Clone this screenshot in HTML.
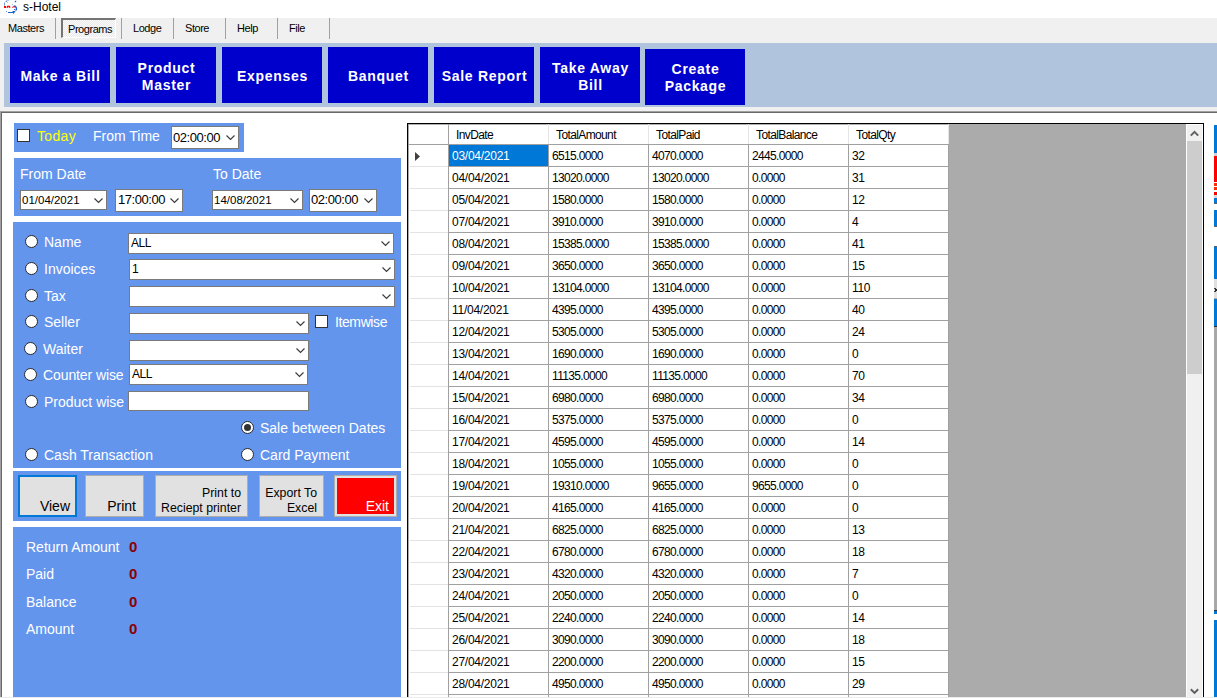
<!DOCTYPE html>
<html><head><meta charset="utf-8">
<style>
*{box-sizing:border-box;margin:0;padding:0}
html,body{width:1217px;height:698px;overflow:hidden;background:#fff;position:relative;font-family:"Liberation Sans",sans-serif}
.a{position:absolute}
.t{position:absolute;white-space:nowrap;line-height:1}
#menu{left:0;top:18px;width:1217px;height:93px;background:#f0f0f0}
.msep{position:absolute;top:18px;width:1px;height:21px;background:#a0a0a0}
.mi{position:absolute;font-size:11px;letter-spacing:-0.45px;color:#000;line-height:1}
#tool{left:4px;top:43px;width:1213px;height:64px;background:#b0c4de}
.tb{position:absolute;background:#0000cd;color:#fff;font-weight:bold;font-size:14px;letter-spacing:0.7px;text-align:center;display:flex;align-items:center;justify-content:center;line-height:17px;width:100px;height:56px;padding-top:3px;padding-left:1px}
.pnl{position:absolute;background:#6495ed}
.lbl{position:absolute;color:#fff;font-size:14px;line-height:1;white-space:nowrap}
.cb{position:absolute;background:#fff;border:1px solid #7a7a7a}
.cb span{position:absolute;left:2px;font-size:11px;color:#000;line-height:1;white-space:nowrap}
.cb svg{position:absolute}
.rd{position:absolute;width:13px;height:13px;border-radius:50%;background:#fff;border:1.3px solid #2a2a2a}
.btn{position:absolute;background:#e1e1e1;border:1px solid #adadad;color:#000;font-size:13px;line-height:15px;text-align:right}
.val{position:absolute;color:#8b0000;font-weight:bold;font-size:15px;line-height:1}
.gc,.gh{position:absolute;font-size:12px;line-height:1;white-space:nowrap;color:#000}
.gh{font-size:12px;letter-spacing:-0.62px}
.gd{letter-spacing:-0.26px}
.gn{letter-spacing:-0.65px}
.gq{letter-spacing:-0.3px}
.tm{position:absolute;font-size:13px;letter-spacing:-0.45px;line-height:1;white-space:nowrap;color:#000}
.dt{position:absolute;font-size:11.5px;line-height:1;white-space:nowrap;color:#000}
.ct{position:absolute;font-size:12px;letter-spacing:-0.5px;line-height:1;white-space:nowrap;color:#000}
.bt1{position:absolute;font-size:14px;line-height:1;white-space:nowrap;color:#000;text-align:right}
.bt2{position:absolute;font-size:12.3px;line-height:14.5px;white-space:nowrap;color:#000;text-align:right}
</style></head><body>
<!-- title -->
<svg class="a" style="left:0px;top:0px" width="20" height="15" viewBox="0 0 20 15">
  <path d="M5.5 1.5 L6.5 0.5 M6 1 L7.5 2.5 M7.5 1 L8.5 0" stroke="#5a8ee0" stroke-width="0.9" fill="none"/>
  <path d="M4.5 2.5 L4.5 5.5" stroke="#6d9be8" stroke-width="1" fill="none"/>
  <rect x="14.8" y="0.8" width="1.4" height="1.4" fill="#1060d0"/>
  <rect x="4" y="6" width="2" height="2" fill="#ff0000"/>
  <path d="M7.2 7.8 L7.5 6.5 L9.5 6.5 L9.8 7.8" stroke="#ff1010" stroke-width="1.3" fill="none"/>
  <path d="M12.2 7.6 L14 6.2 L15.5 7.5" stroke="#ff3030" stroke-width="1.2" fill="none"/>
  <path d="M14.5 5.5 L16.3 7.5 L16.5 9.5 L15.5 10.5" stroke="#1a5fd8" stroke-width="1.3" fill="none"/>
  <path d="M8 12.5 L12 12.5 L13.5 11.5 L14.5 11.5 L13.5 13 L12.5 11.5" stroke="#1560d0" stroke-width="1.2" fill="none"/>
  <rect x="6" y="11" width="1" height="1" fill="#6d9be8"/>
  <rect x="14" y="9" width="1" height="1" fill="#3070d8"/>
  <rect x="12" y="4" width="1" height="1" fill="#a0b8e0"/>
</svg>
<div class="t" style="left:23px;top:1px;font-size:12px;color:#000">s-Hotel</div>

<!-- menu -->
<div id="menu" class="a"></div>
<div class="mi" style="left:8px;top:23px">Masters</div>
<div class="msep" style="left:55px"></div>
<div class="a" style="left:61px;top:18px;width:55px;height:20px;border-top:2px solid #747474;border-left:2px solid #747474;border-right:1px solid #fff;border-bottom:1px solid #fff;background:repeating-conic-gradient(#fbfbfb 0 25%,#e9e9e9 0 50%) 0 0/2px 2px"></div>
<div class="mi" style="left:68px;top:24px">Programs</div>
<div class="msep" style="left:121px"></div>
<div class="mi" style="left:133px;top:23px">Lodge</div>
<div class="msep" style="left:173px"></div>
<div class="mi" style="left:185px;top:23px">Store</div>
<div class="msep" style="left:225px"></div>
<div class="mi" style="left:237px;top:23px">Help</div>
<div class="msep" style="left:277px"></div>
<div class="mi" style="left:289px;top:23px">File</div>
<div class="msep" style="left:329px"></div>

<!-- toolbar -->
<div id="tool" class="a"></div>
<div class="tb" style="left:10px;top:47px">Make a Bill</div>
<div class="tb" style="left:116px;top:47px">Product<br>Master</div>
<div class="tb" style="left:222px;top:47px">Expenses</div>
<div class="tb" style="left:328px;top:47px">Banquet</div>
<div class="tb" style="left:434px;top:47px">Sale Report</div>
<div class="tb" style="left:540px;top:47px">Take Away<br>Bill</div>
<div class="tb" style="left:645px;top:49px;padding-top:2px">Create<br>Package</div>

<!-- main frame -->
<div class="a" style="left:0;top:107px;width:1217px;height:4px;background:#f0f0f0"></div>
<div class="a" style="left:0;top:111px;width:1217px;height:1px;background:#a0a0a0"></div>
<div class="a" style="left:1px;top:112px;width:1216px;height:1px;background:#696969"></div>
<div class="a" style="left:0;top:111px;width:1px;height:587px;background:#a0a0a0"></div>
<div class="a" style="left:1px;top:112px;width:1px;height:586px;background:#696969"></div>

<!-- panel 1 -->
<div class="pnl" style="left:14px;top:123px;width:230px;height:29px"></div>
<div class="a" style="left:17px;top:129px;width:13px;height:13px;background:#fff;border:1px solid #333"></div>
<div class="lbl" style="left:37px;top:129px;color:#ffff00;letter-spacing:0.35px">Today</div>
<div class="lbl" style="left:93px;top:129px">From Time</div>

<!-- panel 2 -->
<div class="pnl" style="left:14px;top:158px;width:387px;height:58px"></div>
<div class="lbl" style="left:20px;top:167px">From Date</div>
<div class="lbl" style="left:213px;top:167px">To Date</div>

<!-- panel 3 -->
<div class="pnl" style="left:13px;top:222px;width:388px;height:246px"></div>

<!-- panel 4 -->
<div class="pnl" style="left:13px;top:471px;width:388px;height:50px"></div>

<!-- panel 5 -->
<div class="pnl" style="left:13px;top:527px;width:388px;height:170px"></div>

<div class="a" style="left:171px;top:126px;width:68px;height:23px;background:#fff;border:1px solid #7a7a7a"></div>
<div class="tm" style="left:173px;top:131px">02:00:00</div>
<svg class="a" style="left:226px;top:135px" width="10" height="6" viewBox="0 0 10 6"><path d="M0.5 0.5 L4.5 4.5 L8.5 0.5" fill="none" stroke="#3c3c3c" stroke-width="1.15"/></svg>
<div class="a" style="left:20px;top:190px;width:87px;height:20px;background:#fff;border:1px solid #7a7a7a"></div>
<div class="dt" style="left:22px;top:195px">01/04/2021</div>
<svg class="a" style="left:94px;top:198px" width="10" height="6" viewBox="0 0 10 6"><path d="M0.5 0.5 L4.5 4.5 L8.5 0.5" fill="none" stroke="#3c3c3c" stroke-width="1.15"/></svg>
<div class="a" style="left:115px;top:189px;width:68px;height:23px;background:#fff;border:1px solid #7a7a7a"></div>
<div class="tm" style="left:118px;top:193px">17:00:00</div>
<svg class="a" style="left:170px;top:198px" width="10" height="6" viewBox="0 0 10 6"><path d="M0.5 0.5 L4.5 4.5 L8.5 0.5" fill="none" stroke="#3c3c3c" stroke-width="1.15"/></svg>
<div class="a" style="left:212px;top:190px;width:91px;height:20px;background:#fff;border:1px solid #7a7a7a"></div>
<div class="dt" style="left:214px;top:195px">14/08/2021</div>
<svg class="a" style="left:290px;top:198px" width="10" height="6" viewBox="0 0 10 6"><path d="M0.5 0.5 L4.5 4.5 L8.5 0.5" fill="none" stroke="#3c3c3c" stroke-width="1.15"/></svg>
<div class="a" style="left:309px;top:189px;width:68px;height:23px;background:#fff;border:1px solid #7a7a7a"></div>
<div class="tm" style="left:311px;top:193px">02:00:00</div>
<svg class="a" style="left:364px;top:198px" width="10" height="6" viewBox="0 0 10 6"><path d="M0.5 0.5 L4.5 4.5 L8.5 0.5" fill="none" stroke="#3c3c3c" stroke-width="1.15"/></svg>
<div class="a" style="left:128px;top:233px;width:266px;height:21px;background:#fff;border:1px solid #7a7a7a"></div>
<div class="ct" style="left:131px;top:237px">ALL</div>
<svg class="a" style="left:381px;top:241px" width="10" height="6" viewBox="0 0 10 6"><path d="M0.5 0.5 L4.5 4.5 L8.5 0.5" fill="none" stroke="#3c3c3c" stroke-width="1.15"/></svg>
<div class="a" style="left:129px;top:259px;width:266px;height:21px;background:#fff;border:1px solid #7a7a7a"></div>
<div class="ct" style="left:132px;top:263px">1</div>
<svg class="a" style="left:382px;top:267px" width="10" height="6" viewBox="0 0 10 6"><path d="M0.5 0.5 L4.5 4.5 L8.5 0.5" fill="none" stroke="#3c3c3c" stroke-width="1.15"/></svg>
<div class="a" style="left:129px;top:286px;width:266px;height:21px;background:#fff;border:1px solid #7a7a7a"></div>
<svg class="a" style="left:382px;top:294px" width="10" height="6" viewBox="0 0 10 6"><path d="M0.5 0.5 L4.5 4.5 L8.5 0.5" fill="none" stroke="#3c3c3c" stroke-width="1.15"/></svg>
<div class="a" style="left:129px;top:313px;width:180px;height:21px;background:#fff;border:1px solid #7a7a7a"></div>
<svg class="a" style="left:296px;top:321px" width="10" height="6" viewBox="0 0 10 6"><path d="M0.5 0.5 L4.5 4.5 L8.5 0.5" fill="none" stroke="#3c3c3c" stroke-width="1.15"/></svg>
<div class="a" style="left:129px;top:340px;width:180px;height:21px;background:#fff;border:1px solid #7a7a7a"></div>
<svg class="a" style="left:296px;top:348px" width="10" height="6" viewBox="0 0 10 6"><path d="M0.5 0.5 L4.5 4.5 L8.5 0.5" fill="none" stroke="#3c3c3c" stroke-width="1.15"/></svg>
<div class="a" style="left:129px;top:364px;width:179px;height:21px;background:#fff;border:1px solid #7a7a7a"></div>
<div class="ct" style="left:132px;top:368px">ALL</div>
<svg class="a" style="left:295px;top:372px" width="10" height="6" viewBox="0 0 10 6"><path d="M0.5 0.5 L4.5 4.5 L8.5 0.5" fill="none" stroke="#3c3c3c" stroke-width="1.15"/></svg>
<div class="a" style="left:128px;top:391px;width:181px;height:20px;background:#fff;border:1px solid #7a7a7a"></div>
<div class="rd" style="left:25px;top:235px"></div>
<div class="lbl" style="left:44px;top:234.5px">Name</div>
<div class="rd" style="left:25px;top:262px"></div>
<div class="lbl" style="left:44px;top:261.5px">Invoices</div>
<div class="rd" style="left:25px;top:289px"></div>
<div class="lbl" style="left:44px;top:288.5px">Tax</div>
<div class="rd" style="left:25px;top:315px"></div>
<div class="lbl" style="left:44px;top:314.5px">Seller</div>
<div class="rd" style="left:24px;top:342px"></div>
<div class="lbl" style="left:43px;top:341.5px">Waiter</div>
<div class="rd" style="left:24px;top:368px"></div>
<div class="lbl" style="left:43px;top:367.5px;letter-spacing:-0.1px">Counter wise</div>
<div class="rd" style="left:25px;top:395px"></div>
<div class="lbl" style="left:44px;top:394.5px">Product wise</div>
<div class="rd" style="left:241px;top:421px"></div>
<div class="lbl" style="left:260px;top:420.5px">Sale between Dates</div>
<div class="rd" style="left:25px;top:448px"></div>
<div class="lbl" style="left:44px;top:447.5px">Cash Transaction</div>
<div class="rd" style="left:241px;top:448px"></div>
<div class="lbl" style="left:260px;top:447.5px">Card Payment</div>
<div class="a" style="left:244px;top:424px;width:7px;height:7px;border-radius:50%;background:#333"></div>
<div class="a" style="left:315px;top:315px;width:13px;height:13px;background:#fff;border:1px solid #333"></div>
<div class="lbl" style="left:335px;top:315px;letter-spacing:-0.4px">Itemwise</div>
<div class="a" style="left:18px;top:475px;width:59px;height:42px;background:#e1e1e1;border:2px solid #0078d7"></div>
<div class="bt1" style="right:1147px;top:499px">View</div>
<div class="a" style="left:85px;top:475px;width:59px;height:42px;background:#e1e1e1;border:1px solid #adadad"></div>
<div class="bt1" style="right:1081px;top:499px">Print</div>
<div class="a" style="left:155px;top:475px;width:93px;height:42px;background:#e1e1e1;border:1px solid #adadad"></div>
<div class="bt2" style="right:976px;top:486px">Print to<br>Reciept printer</div>
<div class="a" style="left:259px;top:475px;width:65px;height:42px;background:#e1e1e1;border:1px solid #adadad"></div>
<div class="bt2" style="right:900px;top:486px">Export To<br>Excel</div>
<div class="a" style="left:334px;top:475px;width:63px;height:42px;background:#e1e1e1;border:1px solid #adadad"></div>
<div class="a" style="left:337px;top:478px;width:57px;height:36px;background:#ff0000"></div>
<div class="bt1" style="right:828px;top:499px;color:#fff">Exit</div>
<div class="lbl" style="left:26px;top:540px">Return Amount</div>
<div class="val" style="left:129px;top:539px">0</div>
<div class="lbl" style="left:26px;top:567px">Paid</div>
<div class="val" style="left:129px;top:566px">0</div>
<div class="lbl" style="left:26px;top:595px">Balance</div>
<div class="val" style="left:129px;top:594px">0</div>
<div class="lbl" style="left:26px;top:622px">Amount</div>
<div class="val" style="left:129px;top:621px">0</div>
<!-- grid -->
<div class="a" style="left:407px;top:123px;width:797px;height:1px;background:#000"></div>
<div class="a" style="left:407px;top:123px;width:1px;height:575px;background:#000"></div>
<div class="a" style="left:1203px;top:123px;width:1px;height:575px;background:#000"></div>
<div class="a" style="left:408px;top:124px;width:541px;height:574px;background:#fff"></div>
<div class="a" style="left:408px;top:124px;width:778px;height:1px;background:#b0b0b0"></div>
<div class="a" style="left:408px;top:124px;width:1px;height:574px;background:#a8a8a8"></div>
<div class="a" style="left:949px;top:124px;width:237px;height:574px;background:#ababab"></div>
<div class="a" style="left:1186px;top:124px;width:17px;height:574px;background:#fff"></div>
<div class="a" style="left:1187px;top:125px;width:15px;height:573px;background:#f0f0f0"></div>
<div class="a" style="left:1187px;top:141px;width:15px;height:233px;background:#cdcdcd"></div>
<svg class="a" style="left:1189px;top:128px" width="11" height="10" viewBox="0 0 11 10"><path d="M1.8 7.6 L5.5 3.9 L9.2 7.6" fill="none" stroke="#606060" stroke-width="2"/></svg>
<svg class="a" style="left:1189px;top:686px" width="11" height="10" viewBox="0 0 11 10"><path d="M1.8 3.2 L5.5 6.9 L9.2 3.2" fill="none" stroke="#606060" stroke-width="2"/></svg>
<div class="a" style="left:408px;top:144px;width:541px;height:1px;background:#a0a0a0"></div>
<div class="a" style="left:448px;top:124px;width:1px;height:20px;background:#a0a0a0"></div>
<div class="a" style="left:548px;top:124px;width:1px;height:20px;background:#e5e5e5"></div>
<div class="a" style="left:648px;top:124px;width:1px;height:20px;background:#e5e5e5"></div>
<div class="a" style="left:748px;top:124px;width:1px;height:20px;background:#e5e5e5"></div>
<div class="a" style="left:848px;top:124px;width:1px;height:20px;background:#e5e5e5"></div>
<div class="a" style="left:948px;top:124px;width:1px;height:20px;background:#e5e5e5"></div>
<div class="a" style="left:448px;top:145px;width:1px;height:553px;background:#a0a0a0"></div>
<div class="a" style="left:548px;top:145px;width:1px;height:553px;background:#a0a0a0"></div>
<div class="a" style="left:648px;top:145px;width:1px;height:553px;background:#a0a0a0"></div>
<div class="a" style="left:748px;top:145px;width:1px;height:553px;background:#a0a0a0"></div>
<div class="a" style="left:848px;top:145px;width:1px;height:553px;background:#a0a0a0"></div>
<div class="a" style="left:948px;top:145px;width:1px;height:553px;background:#a0a0a0"></div>
<div class="a" style="left:449px;top:166px;width:499px;height:1px;background:#a0a0a0"></div>
<div class="a" style="left:410px;top:166px;width:38px;height:1px;background:#e3e3e3"></div>
<div class="a" style="left:449px;top:188px;width:499px;height:1px;background:#a0a0a0"></div>
<div class="a" style="left:410px;top:188px;width:38px;height:1px;background:#e3e3e3"></div>
<div class="a" style="left:449px;top:210px;width:499px;height:1px;background:#a0a0a0"></div>
<div class="a" style="left:410px;top:210px;width:38px;height:1px;background:#e3e3e3"></div>
<div class="a" style="left:449px;top:232px;width:499px;height:1px;background:#a0a0a0"></div>
<div class="a" style="left:410px;top:232px;width:38px;height:1px;background:#e3e3e3"></div>
<div class="a" style="left:449px;top:254px;width:499px;height:1px;background:#a0a0a0"></div>
<div class="a" style="left:410px;top:254px;width:38px;height:1px;background:#e3e3e3"></div>
<div class="a" style="left:449px;top:276px;width:499px;height:1px;background:#a0a0a0"></div>
<div class="a" style="left:410px;top:276px;width:38px;height:1px;background:#e3e3e3"></div>
<div class="a" style="left:449px;top:298px;width:499px;height:1px;background:#a0a0a0"></div>
<div class="a" style="left:410px;top:298px;width:38px;height:1px;background:#e3e3e3"></div>
<div class="a" style="left:449px;top:320px;width:499px;height:1px;background:#a0a0a0"></div>
<div class="a" style="left:410px;top:320px;width:38px;height:1px;background:#e3e3e3"></div>
<div class="a" style="left:449px;top:342px;width:499px;height:1px;background:#a0a0a0"></div>
<div class="a" style="left:410px;top:342px;width:38px;height:1px;background:#e3e3e3"></div>
<div class="a" style="left:449px;top:364px;width:499px;height:1px;background:#a0a0a0"></div>
<div class="a" style="left:410px;top:364px;width:38px;height:1px;background:#e3e3e3"></div>
<div class="a" style="left:449px;top:386px;width:499px;height:1px;background:#a0a0a0"></div>
<div class="a" style="left:410px;top:386px;width:38px;height:1px;background:#e3e3e3"></div>
<div class="a" style="left:449px;top:408px;width:499px;height:1px;background:#a0a0a0"></div>
<div class="a" style="left:410px;top:408px;width:38px;height:1px;background:#e3e3e3"></div>
<div class="a" style="left:449px;top:430px;width:499px;height:1px;background:#a0a0a0"></div>
<div class="a" style="left:410px;top:430px;width:38px;height:1px;background:#e3e3e3"></div>
<div class="a" style="left:449px;top:452px;width:499px;height:1px;background:#a0a0a0"></div>
<div class="a" style="left:410px;top:452px;width:38px;height:1px;background:#e3e3e3"></div>
<div class="a" style="left:449px;top:474px;width:499px;height:1px;background:#a0a0a0"></div>
<div class="a" style="left:410px;top:474px;width:38px;height:1px;background:#e3e3e3"></div>
<div class="a" style="left:449px;top:496px;width:499px;height:1px;background:#a0a0a0"></div>
<div class="a" style="left:410px;top:496px;width:38px;height:1px;background:#e3e3e3"></div>
<div class="a" style="left:449px;top:518px;width:499px;height:1px;background:#a0a0a0"></div>
<div class="a" style="left:410px;top:518px;width:38px;height:1px;background:#e3e3e3"></div>
<div class="a" style="left:449px;top:540px;width:499px;height:1px;background:#a0a0a0"></div>
<div class="a" style="left:410px;top:540px;width:38px;height:1px;background:#e3e3e3"></div>
<div class="a" style="left:449px;top:562px;width:499px;height:1px;background:#a0a0a0"></div>
<div class="a" style="left:410px;top:562px;width:38px;height:1px;background:#e3e3e3"></div>
<div class="a" style="left:449px;top:584px;width:499px;height:1px;background:#a0a0a0"></div>
<div class="a" style="left:410px;top:584px;width:38px;height:1px;background:#e3e3e3"></div>
<div class="a" style="left:449px;top:606px;width:499px;height:1px;background:#a0a0a0"></div>
<div class="a" style="left:410px;top:606px;width:38px;height:1px;background:#e3e3e3"></div>
<div class="a" style="left:449px;top:628px;width:499px;height:1px;background:#a0a0a0"></div>
<div class="a" style="left:410px;top:628px;width:38px;height:1px;background:#e3e3e3"></div>
<div class="a" style="left:449px;top:650px;width:499px;height:1px;background:#a0a0a0"></div>
<div class="a" style="left:410px;top:650px;width:38px;height:1px;background:#e3e3e3"></div>
<div class="a" style="left:449px;top:672px;width:499px;height:1px;background:#a0a0a0"></div>
<div class="a" style="left:410px;top:672px;width:38px;height:1px;background:#e3e3e3"></div>
<div class="a" style="left:449px;top:694px;width:499px;height:1px;background:#a0a0a0"></div>
<div class="a" style="left:410px;top:694px;width:38px;height:1px;background:#e3e3e3"></div>
<div class="a" style="left:449px;top:145px;width:99px;height:21px;background:#0078d7"></div>
<svg class="a" style="left:414px;top:151px" width="8" height="11" viewBox="0 0 8 11"><path d="M1 1 L6 5.5 L1 10 Z" fill="#404040"/></svg>
<div class="gh" style="left:456px;top:129px">InvDate</div>
<div class="gh" style="left:556px;top:129px">TotalAmount</div>
<div class="gh" style="left:656px;top:129px">TotalPaid</div>
<div class="gh" style="left:756px;top:129px">TotalBalance</div>
<div class="gh" style="left:856px;top:129px">TotalQty</div>
<div class="gc gd" style="left:452px;top:150px;color:#fff">03/04/2021</div>
<div class="gc gn" style="left:552px;top:150px">6515.0000</div>
<div class="gc gn" style="left:652px;top:150px">4070.0000</div>
<div class="gc gn" style="left:752px;top:150px">2445.0000</div>
<div class="gc gq" style="left:852px;top:150px">32</div>
<div class="gc gd" style="left:452px;top:172px">04/04/2021</div>
<div class="gc gn" style="left:552px;top:172px">13020.0000</div>
<div class="gc gn" style="left:652px;top:172px">13020.0000</div>
<div class="gc gn" style="left:752px;top:172px">0.0000</div>
<div class="gc gq" style="left:852px;top:172px">31</div>
<div class="gc gd" style="left:452px;top:194px">05/04/2021</div>
<div class="gc gn" style="left:552px;top:194px">1580.0000</div>
<div class="gc gn" style="left:652px;top:194px">1580.0000</div>
<div class="gc gn" style="left:752px;top:194px">0.0000</div>
<div class="gc gq" style="left:852px;top:194px">12</div>
<div class="gc gd" style="left:452px;top:216px">07/04/2021</div>
<div class="gc gn" style="left:552px;top:216px">3910.0000</div>
<div class="gc gn" style="left:652px;top:216px">3910.0000</div>
<div class="gc gn" style="left:752px;top:216px">0.0000</div>
<div class="gc gq" style="left:852px;top:216px">4</div>
<div class="gc gd" style="left:452px;top:238px">08/04/2021</div>
<div class="gc gn" style="left:552px;top:238px">15385.0000</div>
<div class="gc gn" style="left:652px;top:238px">15385.0000</div>
<div class="gc gn" style="left:752px;top:238px">0.0000</div>
<div class="gc gq" style="left:852px;top:238px">41</div>
<div class="gc gd" style="left:452px;top:260px">09/04/2021</div>
<div class="gc gn" style="left:552px;top:260px">3650.0000</div>
<div class="gc gn" style="left:652px;top:260px">3650.0000</div>
<div class="gc gn" style="left:752px;top:260px">0.0000</div>
<div class="gc gq" style="left:852px;top:260px">15</div>
<div class="gc gd" style="left:452px;top:282px">10/04/2021</div>
<div class="gc gn" style="left:552px;top:282px">13104.0000</div>
<div class="gc gn" style="left:652px;top:282px">13104.0000</div>
<div class="gc gn" style="left:752px;top:282px">0.0000</div>
<div class="gc gq" style="left:852px;top:282px">110</div>
<div class="gc gd" style="left:452px;top:304px">11/04/2021</div>
<div class="gc gn" style="left:552px;top:304px">4395.0000</div>
<div class="gc gn" style="left:652px;top:304px">4395.0000</div>
<div class="gc gn" style="left:752px;top:304px">0.0000</div>
<div class="gc gq" style="left:852px;top:304px">40</div>
<div class="gc gd" style="left:452px;top:326px">12/04/2021</div>
<div class="gc gn" style="left:552px;top:326px">5305.0000</div>
<div class="gc gn" style="left:652px;top:326px">5305.0000</div>
<div class="gc gn" style="left:752px;top:326px">0.0000</div>
<div class="gc gq" style="left:852px;top:326px">24</div>
<div class="gc gd" style="left:452px;top:348px">13/04/2021</div>
<div class="gc gn" style="left:552px;top:348px">1690.0000</div>
<div class="gc gn" style="left:652px;top:348px">1690.0000</div>
<div class="gc gn" style="left:752px;top:348px">0.0000</div>
<div class="gc gq" style="left:852px;top:348px">0</div>
<div class="gc gd" style="left:452px;top:370px">14/04/2021</div>
<div class="gc gn" style="left:552px;top:370px">11135.0000</div>
<div class="gc gn" style="left:652px;top:370px">11135.0000</div>
<div class="gc gn" style="left:752px;top:370px">0.0000</div>
<div class="gc gq" style="left:852px;top:370px">70</div>
<div class="gc gd" style="left:452px;top:392px">15/04/2021</div>
<div class="gc gn" style="left:552px;top:392px">6980.0000</div>
<div class="gc gn" style="left:652px;top:392px">6980.0000</div>
<div class="gc gn" style="left:752px;top:392px">0.0000</div>
<div class="gc gq" style="left:852px;top:392px">34</div>
<div class="gc gd" style="left:452px;top:414px">16/04/2021</div>
<div class="gc gn" style="left:552px;top:414px">5375.0000</div>
<div class="gc gn" style="left:652px;top:414px">5375.0000</div>
<div class="gc gn" style="left:752px;top:414px">0.0000</div>
<div class="gc gq" style="left:852px;top:414px">0</div>
<div class="gc gd" style="left:452px;top:436px">17/04/2021</div>
<div class="gc gn" style="left:552px;top:436px">4595.0000</div>
<div class="gc gn" style="left:652px;top:436px">4595.0000</div>
<div class="gc gn" style="left:752px;top:436px">0.0000</div>
<div class="gc gq" style="left:852px;top:436px">14</div>
<div class="gc gd" style="left:452px;top:458px">18/04/2021</div>
<div class="gc gn" style="left:552px;top:458px">1055.0000</div>
<div class="gc gn" style="left:652px;top:458px">1055.0000</div>
<div class="gc gn" style="left:752px;top:458px">0.0000</div>
<div class="gc gq" style="left:852px;top:458px">0</div>
<div class="gc gd" style="left:452px;top:480px">19/04/2021</div>
<div class="gc gn" style="left:552px;top:480px">19310.0000</div>
<div class="gc gn" style="left:652px;top:480px">9655.0000</div>
<div class="gc gn" style="left:752px;top:480px">9655.0000</div>
<div class="gc gq" style="left:852px;top:480px">0</div>
<div class="gc gd" style="left:452px;top:502px">20/04/2021</div>
<div class="gc gn" style="left:552px;top:502px">4165.0000</div>
<div class="gc gn" style="left:652px;top:502px">4165.0000</div>
<div class="gc gn" style="left:752px;top:502px">0.0000</div>
<div class="gc gq" style="left:852px;top:502px">0</div>
<div class="gc gd" style="left:452px;top:524px">21/04/2021</div>
<div class="gc gn" style="left:552px;top:524px">6825.0000</div>
<div class="gc gn" style="left:652px;top:524px">6825.0000</div>
<div class="gc gn" style="left:752px;top:524px">0.0000</div>
<div class="gc gq" style="left:852px;top:524px">13</div>
<div class="gc gd" style="left:452px;top:546px">22/04/2021</div>
<div class="gc gn" style="left:552px;top:546px">6780.0000</div>
<div class="gc gn" style="left:652px;top:546px">6780.0000</div>
<div class="gc gn" style="left:752px;top:546px">0.0000</div>
<div class="gc gq" style="left:852px;top:546px">18</div>
<div class="gc gd" style="left:452px;top:568px">23/04/2021</div>
<div class="gc gn" style="left:552px;top:568px">4320.0000</div>
<div class="gc gn" style="left:652px;top:568px">4320.0000</div>
<div class="gc gn" style="left:752px;top:568px">0.0000</div>
<div class="gc gq" style="left:852px;top:568px">7</div>
<div class="gc gd" style="left:452px;top:590px">24/04/2021</div>
<div class="gc gn" style="left:552px;top:590px">2050.0000</div>
<div class="gc gn" style="left:652px;top:590px">2050.0000</div>
<div class="gc gn" style="left:752px;top:590px">0.0000</div>
<div class="gc gq" style="left:852px;top:590px">0</div>
<div class="gc gd" style="left:452px;top:612px">25/04/2021</div>
<div class="gc gn" style="left:552px;top:612px">2240.0000</div>
<div class="gc gn" style="left:652px;top:612px">2240.0000</div>
<div class="gc gn" style="left:752px;top:612px">0.0000</div>
<div class="gc gq" style="left:852px;top:612px">14</div>
<div class="gc gd" style="left:452px;top:634px">26/04/2021</div>
<div class="gc gn" style="left:552px;top:634px">3090.0000</div>
<div class="gc gn" style="left:652px;top:634px">3090.0000</div>
<div class="gc gn" style="left:752px;top:634px">0.0000</div>
<div class="gc gq" style="left:852px;top:634px">18</div>
<div class="gc gd" style="left:452px;top:656px">27/04/2021</div>
<div class="gc gn" style="left:552px;top:656px">2200.0000</div>
<div class="gc gn" style="left:652px;top:656px">2200.0000</div>
<div class="gc gn" style="left:752px;top:656px">0.0000</div>
<div class="gc gq" style="left:852px;top:656px">15</div>
<div class="gc gd" style="left:452px;top:678px">28/04/2021</div>
<div class="gc gn" style="left:552px;top:678px">4950.0000</div>
<div class="gc gn" style="left:652px;top:678px">4950.0000</div>
<div class="gc gn" style="left:752px;top:678px">0.0000</div>
<div class="gc gq" style="left:852px;top:678px">29</div>
<div class="a" style="left:1214px;top:125px;width:3px;height:28px;background:#0078d7"></div>
<div class="a" style="left:1214px;top:153px;width:3px;height:3px;background:#d0d0d0"></div>
<div class="a" style="left:1214px;top:156px;width:3px;height:26px;background:#ff0000"></div>
<div class="a" style="left:1214px;top:182px;width:3px;height:1px;background:#ffffff"></div>
<div class="a" style="left:1214px;top:183px;width:3px;height:3px;background:#ff3000"></div>
<div class="a" style="left:1214px;top:186px;width:3px;height:1px;background:#ffffff"></div>
<div class="a" style="left:1214px;top:187px;width:3px;height:3px;background:#ff3000"></div>
<div class="a" style="left:1214px;top:190px;width:3px;height:2px;background:#ffffff"></div>
<div class="a" style="left:1214px;top:192px;width:3px;height:3px;background:#ff0000"></div>
<div class="a" style="left:1214px;top:195px;width:3px;height:3px;background:#d8d8d8"></div>
<div class="a" style="left:1214px;top:198px;width:3px;height:5px;background:#0078d7"></div>
<div class="a" style="left:1214px;top:203px;width:3px;height:1px;background:#606060"></div>
<div class="a" style="left:1214px;top:204px;width:3px;height:6px;background:#fff"></div>
<div class="a" style="left:1214px;top:210px;width:3px;height:16px;background:#0078d7"></div>
<div class="a" style="left:1214px;top:226px;width:3px;height:1px;background:#606060"></div>
<div class="a" style="left:1214px;top:227px;width:3px;height:19px;background:#fff"></div>
<div class="a" style="left:1214px;top:246px;width:3px;height:1px;background:#606060"></div>
<div class="a" style="left:1214px;top:247px;width:3px;height:32px;background:#0078d7"></div>
<div class="a" style="left:1214px;top:279px;width:3px;height:19px;background:#e0e0e0"></div>
<div class="a" style="left:1214px;top:298px;width:3px;height:1px;background:#b0a8a0"></div>
<div class="a" style="left:1214px;top:299px;width:3px;height:27px;background:#0078d7"></div>
<div class="a" style="left:1214px;top:326px;width:3px;height:1px;background:#303030"></div>
<div class="a" style="left:1214px;top:327px;width:3px;height:283px;background:#a8a8a8"></div>
<div class="a" style="left:1214px;top:610px;width:3px;height:1px;background:#303030"></div>
<div class="a" style="left:1214px;top:611px;width:3px;height:3px;background:#0078d7"></div>
<div class="a" style="left:1214px;top:614px;width:3px;height:6px;background:#fff"></div>
<div class="a" style="left:1214px;top:620px;width:3px;height:77px;background:#0078d7"></div>
<div class="a" style="left:1214px;top:288px;width:2px;height:1px;background:#404040"></div>
<div class="a" style="left:1215px;top:289px;width:2px;height:2px;background:#202020"></div>
<div class="a" style="left:1214px;top:291px;width:2px;height:1px;background:#404040"></div>
<div class="a" style="left:0;top:697px;width:1217px;height:1px;background:#ececec"></div>

</body></html>
